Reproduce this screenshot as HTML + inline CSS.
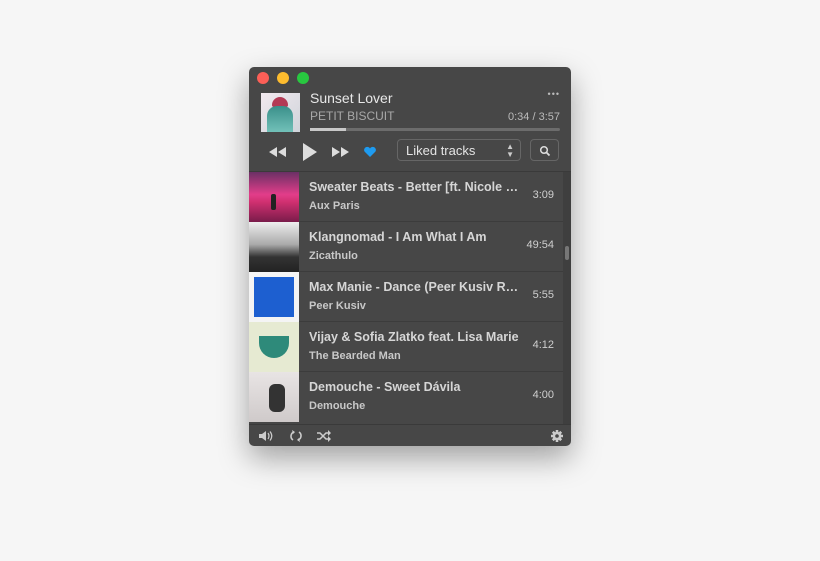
<!DOCTYPE html>
<html><head><style>
body{margin:0;width:820px;height:561px;background:#f6f6f6;font-family:"Liberation Sans",sans-serif;position:relative;overflow:hidden}
.win{position:absolute;left:249px;top:67px;width:322px;height:379px;background:#474747;border-radius:5px;box-shadow:0 12px 30px rgba(0,0,0,.35);overflow:hidden}
.dot{position:absolute;top:5px;width:12px;height:12px;border-radius:50%}
.abs{position:absolute}
.row{position:absolute;left:0;width:314px;height:50px}
.row .art{position:absolute;left:0;top:0;width:50px;height:50px;overflow:hidden}
.row .t{position:absolute;left:60px;top:8px;color:#d6d6d6;font-size:12.5px;font-weight:bold;white-space:nowrap;width:212px;overflow:hidden;text-overflow:ellipsis}
.row .a{position:absolute;left:60px;top:28px;color:#c8c8c8;font-size:11px;font-weight:bold}
.row .d{position:absolute;right:9px;top:17px;color:#cfcfcf;font-size:11px}
.sep{position:absolute;left:50px;right:0;bottom:0;height:1px;background:#3c3c3c}
</style></head><body>
<div class="win">
<div class="dot" style="left:8px;background:#fc5f57"></div>
<div class="dot" style="left:28px;background:#fdbc2e"></div>
<div class="dot" style="left:48px;background:#28c840"></div>
<div class="abs" style="left:12px;top:26px;width:39px;height:39px;background:linear-gradient(135deg,#f2e9ef,#cfd4da);overflow:hidden"><div class="abs" style="left:11px;top:4px;width:16px;height:10px;border-radius:8px 8px 2px 2px;background:#b33a55"></div><div class="abs" style="left:6px;top:13px;width:26px;height:30px;border-radius:10px 10px 4px 4px;background:linear-gradient(#3a8f8a,#7bc9c0)"></div></div>
<div class="abs" style="left:61px;top:23px;color:#e8e8e8;font-size:14px">Sunset Lover</div>
<div class="abs" style="left:61px;top:42px;color:#a8a8a8;font-size:12px">PETIT BISCUIT</div>
<div class="abs" style="right:11px;top:22px;color:#bbb;font-size:9px;letter-spacing:1px">•••</div>
<div class="abs" style="right:11px;top:44px;color:#bbb;font-size:11px">0:34 / 3:57</div>
<div class="abs" style="left:61px;top:61px;width:250px;height:3px;background:#6c6c6c;border-radius:2px"><div style="width:36px;height:3px;background:#c8c8c8"></div></div>
<svg class="abs" style="left:19px;top:78px" width="20" height="14"><path d="M9 2L1 7l8 5zM18 2l-8 5 8 5z" fill="#ddd"/></svg>
<svg class="abs" style="left:52px;top:74px" width="18" height="22"><path d="M2 2l14 9-14 9z" fill="#ddd"/></svg>
<svg class="abs" style="left:82px;top:78px" width="20" height="14"><path d="M1 2l8 5-8 5zM10 2l8 5-8 5z" fill="#ddd"/></svg>
<svg class="abs" style="left:114px;top:79px" width="14" height="12"><path d="M7 11L1.5 5.5A3 3 0 0 1 7 2.5 3 3 0 0 1 12.5 5.5z" fill="#1e9bf0"/></svg>
<div class="abs" style="left:148px;top:72px;width:124px;height:22px;border:1px solid #666;border-radius:4px;color:#e4e4e4;font-size:13px;line-height:22px;padding-left:8px;box-sizing:border-box">Liked tracks<span style="position:absolute;right:6px;font-size:8px;line-height:8px;color:#ccc;top:3px">▲<br>▼</span></div>
<div class="abs" style="left:281px;top:72px;width:29px;height:22px;border:1px solid #666;border-radius:4px;box-sizing:border-box"><svg width="29" height="22"><circle cx="13" cy="10" r="3.3" stroke="#ddd" stroke-width="1.5" fill="none"/><path d="M15.5 12.5l3 3" stroke="#ddd" stroke-width="1.8"/></svg></div>
<div class="abs" style="left:0;top:104px;width:322px;height:1px;background:#3a3a3a"></div>
<div class="abs" style="left:314px;top:105px;width:8px;height:252px;background:#3f3f3f"><div style="position:absolute;left:2px;top:74px;width:4px;height:14px;background:#777;border-radius:2px"></div></div>

<div class="row" style="top:105px"><div class="art" style="background:linear-gradient(#6a3065,#e23d8a 45%,#d03070 60%,#7a1c4a)"><div style="position:absolute;left:22px;top:22px;width:5px;height:16px;background:#222;border-radius:2px"></div></div><div class="t">Sweater Beats - Better [ft. Nicole Millar]</div><div class="a">Aux Paris</div><div class="d">3:09</div><div class="sep"></div></div>
<div class="row" style="top:155px"><div class="art" style="background:linear-gradient(#eee,#aaa 45%,#333 70%,#222)"></div><div class="t">Klangnomad - I Am What I Am</div><div class="a">Zicathulo</div><div class="d">49:54</div><div class="sep"></div></div>
<div class="row" style="top:205px"><div class="art" style="background:#f4f4f4"><div style="position:absolute;left:5px;top:5px;width:40px;height:40px;background:#1d5fd0"></div></div><div class="t">Max Manie - Dance (Peer Kusiv Remix)</div><div class="a">Peer Kusiv</div><div class="d">5:55</div><div class="sep"></div></div>
<div class="row" style="top:255px"><div class="art" style="background:#e6ead2"><div style="position:absolute;left:10px;top:14px;width:30px;height:22px;border-radius:0 0 15px 15px;background:#2e8a7a"></div></div><div class="t">Vijay &amp; Sofia Zlatko feat. Lisa Marie</div><div class="a">The Bearded Man</div><div class="d">4:12</div><div class="sep"></div></div>
<div class="row" style="top:305px"><div class="art" style="background:linear-gradient(#e8e4e4,#cfcaca)"><div style="position:absolute;left:20px;top:12px;width:16px;height:28px;background:#333;border-radius:6px"></div></div><div class="t">Demouche - Sweet Dávila</div><div class="a">Demouche</div><div class="d">4:00</div></div>

<div class="abs" style="left:0;top:357px;width:322px;height:1px;background:#3a3a3a"></div>
<svg class="abs" style="left:9px;top:363px" width="16" height="12"><path d="M1 4h3l4-3v10l-4-3H1z" fill="#ccc"/><path d="M10 3q2 3 0 6M12 1.5q3.5 4.5 0 9" stroke="#ccc" fill="none" stroke-width="1.2"/></svg>
<svg class="abs" style="left:40px;top:362px" width="14" height="14"><path d="M5 3A4.5 4.5 0 0 0 4 11M9 11A4.5 4.5 0 0 0 10 3" stroke="#ccc" fill="none" stroke-width="1.6"/><path d="M3 1l3 2-2 2zM11 13l-3-2 2-2z" fill="#ccc"/></svg>
<svg class="abs" style="left:67px;top:363px" width="16" height="12"><path d="M1 3h3l6 6h3M1 9h3l6-6h3" stroke="#ccc" fill="none" stroke-width="1.5"/><path d="M12 0l3 3-3 3zM12 6l3 3-3 3z" fill="#ccc"/></svg>
<svg class="abs" style="left:301px;top:362px" width="14" height="14"><g stroke="#ccc" stroke-width="2.6"><path d="M7 1v12M1 7h12M2.8 2.8l8.4 8.4M11.2 2.8l-8.4 8.4"/></g><circle cx="7" cy="7" r="4.3" fill="#ccc"/><circle cx="7" cy="7" r="1.8" fill="#474747"/></svg>
</div>
</body></html>
